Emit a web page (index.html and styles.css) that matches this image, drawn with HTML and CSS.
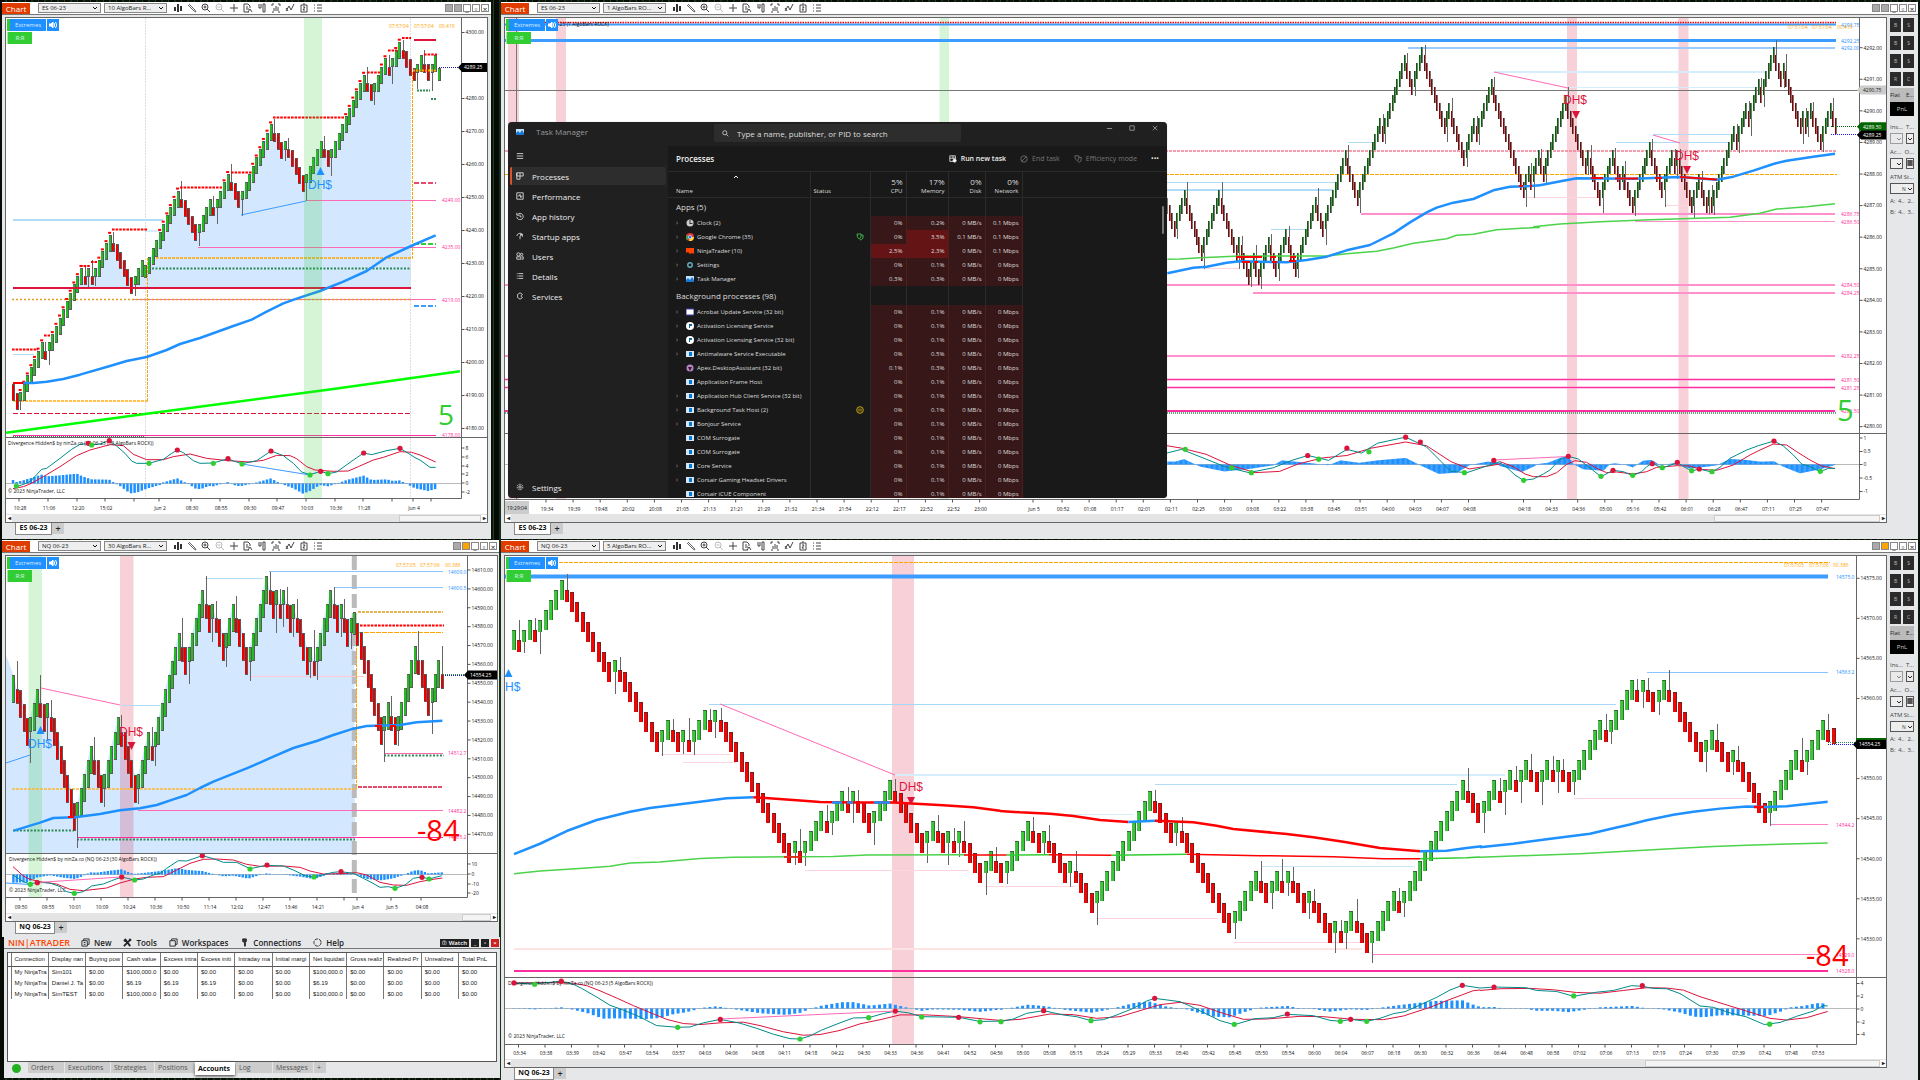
FILE: index.html
```html
<!DOCTYPE html>
<html lang="en">
<head>
<meta charset="utf-8">
<title>Trading desktop</title>
<link rel="stylesheet" href="styles.css">
</head>
<body>
<template id="tools">
  <button aria-label="Bar style"><svg viewBox="0 0 10 10"><path d="M1 4h2v4H1zM4 1h2v8H4zM7 3h2v5H7z" fill="#333" stroke="none"/></svg></button>
  <button aria-label="Draw"><svg viewBox="0 0 10 10"><path d="M2 1l6 6M1 2l6 6M7 8l2 1-1-2" stroke="#666"/></svg></button>
  <button aria-label="Zoom in"><svg viewBox="0 0 10 10"><circle cx="4" cy="4" r="3"/><path d="M6 6l3 3M2.500 4h3M4 2.500v3"/></svg></button>
  <button aria-label="Zoom out" disabled><svg viewBox="0 0 10 10"><circle cx="4" cy="4" r="3"/><path d="M6 6l3 3M2.500 4h3"/></svg></button>
  <button aria-label="Crosshair"><svg viewBox="0 0 10 10"><path d="M5 1v8M1 5h8"/></svg></button>
  <button aria-label="Data box"><svg viewBox="0 0 10 10"><path d="M6 9H1V1h4l2 2v2M3 4h2M3 6h3M5 9l2-3 2 3"/></svg></button>
  <button aria-label="Chart trader"><svg viewBox="0 0 10 10"><path d="M1 2h4M1 4h4M3 4v2M6 1h2v8H6z"/></svg></button>
  <button aria-label="Data series"><svg viewBox="0 0 10 10"><path d="M1 3V1h2M7 1h2v2M1 9h2M7 9h2M3 8V5M5 8V3M7 8V4"/></svg></button>
  <button aria-label="Indicators"><svg viewBox="0 0 10 10"><path d="M1 8l3-5 2 4 3-6M1 5l2 3"/></svg></button>
  <button aria-label="Strategies"><svg viewBox="0 0 10 10"><path d="M2 2h6v7H2zM4 1h2M4 4h2l-2 3h2"/></svg></button>
  <button aria-label="Properties"><svg viewBox="0 0 10 10"><path d="M1 2h1M1 5h1M1 8h1M4 2h5M4 5h5M4 8h5"/></svg></button>
</template>
<template id="trader">
  <div class="grid-buttons"><button>B</button><button>S</button><button>B</button><button>S</button><button>B</button><button>S</button><button>R</button><button>C</button></div>
  <div class="flat"><span>Flat</span><span>E...</span></div>
  <button class="pnl">PnL</button>
  <div class="pair"><span>Ins...</span><span>T...</span></div>
  <div class="pair boxes"><button class="off" aria-label="Instrument"><svg viewBox="0 0 6 4"><path d="M1 1l2 2 2-2"/></svg></button><button aria-label="TIF"><svg viewBox="0 0 6 4"><path d="M1 1l2 2 2-2"/></svg></button></div>
  <div class="pair"><span>Ac...</span><span>O...</span></div>
  <div class="pair boxes"><button aria-label="Account"><svg viewBox="0 0 6 4"><path d="M1 1l2 2 2-2"/></svg></button><button class="calc" aria-label="Order quantity"><svg viewBox="0 0 6 6"><path d="M0 1h6M0 3h6M0 5h6M2 0v6M4 0v6"/></svg></button></div>
  <div class="pair"><span>ATM</span><span>St...</span></div>
  <div class="pair boxes one"><button aria-label="ATM strategy">N <svg viewBox="0 0 6 4"><path d="M1 1l2 2 2-2"/></svg></button></div>
  <div class="quote"><span>A:</span><span>4..</span><span>2..</span></div>
  <div class="quote"><span>B:</span><span>4..</span><span>3..</span></div>
</template>

<main class="desktop">
  <div class="col left">
    <section class="win w-es10">
      <header class="bar"><h2>Chart</h2><select aria-label="Instrument"><option>ES 06-23</option></select><select aria-label="Interval"><option>10 AlgoBars R...</option></select><div class="tools"></div><div class="ctl"><i class="link"></i><i class="link"></i><button aria-label="Minimize">_</button><button aria-label="Maximize">▫</button><button aria-label="Close">×</button></div></header>
      <div class="pane">
        <div class="badges"><div><button class="ext">Extremes</button><button class="snd" aria-label="Sound"><svg viewBox="0 0 8 8"><path d="M0 3h2l2-2v6L2 5H0z" fill="#fff"/><path d="M5 2q1.500 2 0 4M6.500 1q2.500 3 0 6"/></svg></button></div><button class="rr">R:R</button></div>
        <svg class="chart" id="es10" viewBox="6 18 481 496"></svg>
        <div class="scroll"><b>◂</b><i class="th16"></i><b>▸</b></div>
      </div>
      <nav class="tabs"><a href="#es10">ES 06-23</a><button aria-label="Add tab">+</button></nav>
    </section>
    <section class="win w-nq30">
      <header class="bar"><h2>Chart</h2><select aria-label="Instrument"><option>NQ 06-23</option></select><select aria-label="Interval"><option>30 AlgoBars R...</option></select><div class="tools"></div><div class="ctl"><i class="link"></i><i class="link on"></i><button aria-label="Minimize">_</button><button aria-label="Maximize">▫</button><button aria-label="Close">×</button></div></header>
      <div class="pane">
        <div class="badges"><div><button class="ext">Extremes</button><button class="snd" aria-label="Sound"><svg viewBox="0 0 8 8"><path d="M0 3h2l2-2v6L2 5H0z" fill="#fff"/><path d="M5 2q1.500 2 0 4M6.500 1q2.500 3 0 6"/></svg></button></div><button class="rr">R:R</button></div>
        <svg class="chart" id="nq30" viewBox="6 556 491 357"></svg>
        <div class="scroll"><b>◂</b><i class="th6"></i><b>▸</b></div>
      </div>
      <nav class="tabs"><a href="#nq30">NQ 06-23</a><button aria-label="Add tab">+</button></nav>
    </section>
    <section class="win center">
      <header class="menu"><h1>NIN|ATRADER</h1>
        <button><svg viewBox="0 0 10 10"><path d="M1 3h6v6H1zM3 3V1h6v6H7M3 5h2M3 7h2"/></svg>New</button>
        <button><svg viewBox="0 0 10 10"><path d="M1 9l7-7M2 1l6 8M1 2l2 2M7 1l2 2" stroke-width="2"/></svg>Tools</button>
        <button><svg viewBox="0 0 10 10"><path d="M1 3h6v6H1zM3 3V1h6v6H7"/></svg>Workspaces</button>
        <button><svg viewBox="0 0 10 10"><path d="M3 1h4v3L6 5v4H5V5L3 4z" fill="#333"/></svg>Connections</button>
        <button><svg viewBox="0 0 10 10"><circle cx="5" cy="5" r="4" stroke-dasharray="4 1"/></svg>Help</button>
        <div class="winbtns"><button class="watch"><svg viewBox="0 0 10 10"><path d="M1 3h8v6H1zM3 1h4" stroke="#fff"/><circle cx="5" cy="6" r="1" stroke="#fff"/></svg>Watch</button><button aria-label="Minimize">_</button><button aria-label="Maximize">▫</button><button class="red" aria-label="Close">×</button></div>
      </header>
      <div class="accounts">
        <table>
          <thead><tr><th class="g"></th><th>Connection</th><th>Display nan</th><th>Buying pow</th><th>Cash value</th><th>Excess intra</th><th>Excess initi</th><th>Intraday ma</th><th>Initial margi</th><th>Net liquidati</th><th>Gross realiz</th><th>Realized Pr</th><th>Unrealized</th><th>Total PnL</th></tr></thead>
          <tbody>
          <tr><td class="g"></td><td>My NinjaTra</td><td>Sim101</td><td>$0.00</td><td>$100,000.0</td><td>$0.00</td><td>$0.00</td><td>$0.00</td><td>$0.00</td><td>$100,000.0</td><td>$0.00</td><td>$0.00</td><td>$0.00</td><td>$0.00</td></tr>
          <tr><td class="g"></td><td>My NinjaTra</td><td>Daniel J. Ta</td><td>$0.00</td><td>$6.19</td><td>$6.19</td><td>$6.19</td><td>$0.00</td><td>$0.00</td><td>$6.19</td><td>$0.00</td><td>$0.00</td><td>$0.00</td><td>$0.00</td></tr>
          <tr><td class="g"></td><td>My NinjaTra</td><td>SimTEST</td><td>$0.00</td><td>$100,000.0</td><td>$0.00</td><td>$0.00</td><td>$0.00</td><td>$0.00</td><td>$100,000.0</td><td>$0.00</td><td>$0.00</td><td>$0.00</td><td>$0.00</td></tr>
          </tbody>
        </table>
      </div>
      <nav class="foot"><i></i><button class="t1">Orders</button><button class="t2">Executions</button><button class="t3">Strategies</button><button class="t4">Positions</button><button class="t5 cur">Accounts</button><button class="t6">Log</button><button class="t7">Messages</button><button class="t8" aria-label="Add tab">+</button></nav>
    </section>
  </div>

  <div class="col right">
    <section class="win w-es1">
      <header class="bar"><h2>Chart</h2><select aria-label="Instrument"><option>ES 06-23</option></select><select aria-label="Interval"><option>1 AlgoBars RO...</option></select><div class="tools"></div><div class="ctl"><i class="link"></i><i class="link"></i><button aria-label="Minimize">_</button><button aria-label="Maximize">▫</button><button aria-label="Close">×</button></div></header>
      <div class="split">
        <div class="pane">
          <div class="badges"><div><button class="ext">Extremes</button><button class="snd" aria-label="Sound"><svg viewBox="0 0 8 8"><path d="M0 3h2l2-2v6L2 5H0z" fill="#fff"/><path d="M5 2q1.500 2 0 4M6.500 1q2.500 3 0 6"/></svg></button></div><button class="rr">R:R</button></div>
          <svg class="chart" id="es1" viewBox="505 18 1381 496"></svg>
          <div class="scroll"><b>◂</b><i class="th12"></i><b>▸</b></div>
        </div>
        <aside class="trader"></aside>
      </div>
      <nav class="tabs"><a href="#es1">ES 06-23</a><button aria-label="Add tab">+</button></nav>
    </section>
    <section class="win w-nq5">
      <header class="bar"><h2>Chart</h2><select aria-label="Instrument"><option>NQ 06-23</option></select><select aria-label="Interval"><option>5 AlgoBars RO...</option></select><div class="tools"></div><div class="ctl"><i class="link"></i><i class="link on"></i><button aria-label="Minimize">_</button><button aria-label="Maximize">▫</button><button aria-label="Close">×</button></div></header>
      <div class="split">
        <div class="pane">
          <div class="badges"><div><button class="ext">Extremes</button><button class="snd" aria-label="Sound"><svg viewBox="0 0 8 8"><path d="M0 3h2l2-2v6L2 5H0z" fill="#fff"/><path d="M5 2q1.500 2 0 4M6.500 1q2.500 3 0 6"/></svg></button></div><button class="rr">R:R</button></div>
          <svg class="chart" id="nq5" viewBox="505 556 1381 503"></svg>
          <div class="scroll"><b>◂</b><i class="th17"></i><b>▸</b></div>
        </div>
        <aside class="trader"></aside>
      </div>
      <nav class="tabs"><a href="#nq5">NQ 06-23</a><button aria-label="Add tab">+</button></nav>
    </section>
  </div>

  <section class="tm">
    <header><svg class="ico" viewBox="0 0 8 8"><path d="M0 1h8v6H0z" fill="#bfe3ff"/><path d="M0 5l2-2 2 2 2-3 2 3v2H0z" fill="#1976d2"/></svg><h2>Task Manager</h2>
      <label class="search"><svg viewBox="0 0 10 10"><circle cx="4" cy="4" r="3"/><path d="M6 6l3 3"/></svg><input aria-label="Search" placeholder="Type a name, publisher, or PID to search"></label>
      <div class="tmctl"><button aria-label="Minimize"><svg viewBox="0 0 8 8"><path d="M1 4h6"/></svg></button><button aria-label="Maximize"><svg viewBox="0 0 8 8"><path d="M1 1h5v5H1z"/></svg></button><button aria-label="Close"><svg viewBox="0 0 8 8"><path d="M1 1l5 5M6 1L1 6"/></svg></button></div>
    </header>
    <nav>
      <button aria-label="Menu"><svg viewBox="0 0 10 10"><path d="M1 2h8M1 5h8M1 8h8"/></svg></button>
      <a class="cur" href="#p"><svg viewBox="0 0 10 10"><path d="M1 1h8v4H1zM1 1v8h4V1"/></svg>Processes</a>
      <a href="#p"><svg viewBox="0 0 10 10"><path d="M1 1h8v8H1zM2 5h2l1-2 1 4 1-2h1"/></svg>Performance</a>
      <a href="#p"><svg viewBox="0 0 10 10"><path d="M2 3a4 4 0 1 1-1 3M1 1v3h3M5 3v3h2"/></svg>App history</a>
      <a href="#p"><svg viewBox="0 0 10 10"><path d="M1 5a4 4 0 0 1 7-2M5 9V5l3-2M8 6V3H5"/></svg>Startup apps</a>
      <a href="#p"><svg viewBox="0 0 10 10"><circle cx="3" cy="3" r="2"/><circle cx="7" cy="3" r="1.500"/><path d="M1 9V6h5v3zM7 6h2v3H7"/></svg>Users</a>
      <a href="#p"><svg viewBox="0 0 10 10"><path d="M1 2h1M1 5h1M1 8h1M3 2h6M3 5h6M3 8h6"/></svg>Details</a>
      <a href="#p"><svg viewBox="0 0 10 10"><path d="M8 3L5 1 2 3v4l3 2 3-2M8 3L6 5l2 2"/></svg>Services</a>
      <a class="set" href="#p"><svg viewBox="0 0 10 10"><circle cx="5" cy="5" r="1.500"/><circle cx="5" cy="5" r="3.500" stroke-dasharray="2 1"/></svg>Settings</a>
    </nav>
    <div class="body" id="p">
      <div class="cmd"><h3>Processes</h3><button class="run"><svg viewBox="0 0 10 10"><path d="M1 1h7v4M1 1v7h4M1 4h7M5 1v4"/><circle cx="7" cy="7" r="2" fill="#fff"/></svg>Run new task</button><button disabled><svg viewBox="0 0 10 10"><circle cx="5" cy="5" r="4"/><path d="M2 8l6-6"/></svg>End task</button><button disabled><svg viewBox="0 0 10 10"><path d="M1 1h5v3q-1 3-2 3-3-1-3-6M6 3h3v3q0 2-2 3-2 0-2-2"/></svg>Efficiency mode</button><button class="more" aria-label="More">•••</button></div>
      <table class="proc"><colgroup><col class="c1"><col class="c2"><col class="c3"><col class="c4"><col class="c5"><col class="c6"><col></colgroup>
        <thead><tr><th>Name</th><th class="st">Status</th><th><b>5%</b>CPU</th><th><b>17%</b>Memory</th><th><b>0%</b>Disk</th><th><b>0%</b>Network</th><th></th></tr></thead>
        <tbody id="proc"></tbody>
      </table>
      <svg class="sort" viewBox="0 0 6 4"><path d="M1 3l2-2 2 2"/></svg><i class="thumb"></i>
    </div>
  </section>
</main>
<script src="app.js"></script>
</body>
</html>
```
FILE: styles.css
```css
*{box-sizing:border-box}
body{margin:0;background:#0b140c;font-family:"Open Sans","Noto Sans",sans-serif;font-size:7px;color:#222}
h1,h2,h3{margin:0;font-weight:400}
button,select,input{font:inherit;color:inherit;margin:0;padding:0;border:0;background:none;border-radius:0}
button svg,a svg{fill:none;stroke:currentColor}
.desktop{position:relative;display:grid;grid-template-columns:501fr 1419fr;padding-top:2px;background:repeating-linear-gradient(90deg,#060b06 0 5px,#18301a 5px 7px,#0a140a 7px 12px,#22401c 12px 13px)}
.col{display:flex;flex-direction:column;gap:1px;min-width:0}
.win{background:#e6e7e9}
.w-es10{margin:0 10px 0 2px;padding:0 3px 3px}
.w-nq30{margin:0 2px;padding:0 1px 2px 3px}
.w-es1{margin-right:2px;padding:0 0 3px 3px}
.w-nq5{margin-right:2px;padding-left:3px}
.bar{display:flex;align-items:center;height:13px;margin:0 -3px 2px;padding-right:2px;background:#fff;border-bottom:1px solid #777}
.w-nq30 .bar{margin-right:-1px}
.w-es1 .bar,.w-nq5 .bar{margin-right:0}
.bar h2{width:28px;height:11px;background:#e03c00;color:#fff;font-size:8px;line-height:11px;text-align:center;margin-right:8px}
.bar select{width:63px;height:10px;margin-right:3px;padding:0 3px;border:1px solid #888;background:#eee url("data:image/svg+xml,%3Csvg xmlns='http://www.w3.org/2000/svg' viewBox='0 0 6 4'%3E%3Cpath d='M1 1l2 2 2-2' fill='none' stroke='%23111'/%3E%3C/svg%3E") no-repeat right 2px center/6px 4px;font-size:6px;line-height:8px;appearance:none;color:#222}
.tools{display:flex;gap:4px;padding-left:3px}
.tools button{width:10px;height:10px;color:#444}
.tools button:disabled{color:#bbb}
.tools svg{display:block;width:10px;height:10px}
.ctl{display:flex;gap:1px;margin-left:auto}
.ctl i,.ctl button{width:8px;height:8px;border:1px solid #888;line-height:5px;font-size:8px;text-align:center}
.ctl i.link{background:#aaa}
.ctl i.on{background:#ffa500}
.pane{position:relative;background:#fff;border:1px solid #666;min-width:0}
.chart{display:block;width:100%;height:auto}
.badges{position:absolute;left:1px;top:1px;color:#dfefff;font-size:6px}
.badges div{display:flex;gap:1px;height:12px}
.badges button{display:block;height:12px;line-height:12px}
.ext{width:39px;background:#1e90ff;border-left:3px solid #32cd32!important}
.snd{width:12px;background:#1e90ff}
.snd svg{width:8px;height:8px;stroke:#fff}
.badges .snd svg{display:block;margin:0 auto}
.rr{width:25px;margin-top:1px;background:#32cd32;border-left:1px solid #9e9!important}
.scroll{display:flex;height:8px;align-items:center;background:#e4e4e4}
.scroll b{width:6px;font-size:6px;line-height:7px;text-align:center;background:#fff}
.scroll i{margin-left:auto;height:7px;background:#f4f4f4;border:1px solid #ccc}
.th16{width:17%}.th6{width:6%}.th12{width:12%}.th17{width:17%}
.tabs{display:flex;height:13px;padding-left:10px}
.w-nq5 .tabs{height:12px}
.tabs a{width:37px;height:13px;margin-top:-1px;background:#fff;border:1px solid #888;border-top:0;color:#111;text-decoration:none;font-weight:700;font-size:7px;line-height:12px;text-align:center;white-space:nowrap}
.w-nq30 .tabs a,.w-nq5 .tabs a{width:40px}
.tabs button{width:12px;height:11px;background:#ccc;font-size:9px;font-weight:600;line-height:10px}
.split{display:grid;grid-template-columns:1fr 31px}
.trader{padding:1px 4px 0 3px;font-size:6px;color:#444}
.grid-buttons{display:grid;grid-template-columns:11px 11px;justify-content:space-between;gap:4px 0}
.grid-buttons button{height:14px;background:#2b2b2b;color:#bbb;font-size:5px}
.flat{display:flex;justify-content:space-between;height:14px;margin-top:2px;background:#bbb;line-height:14px;color:#222}
.pnl{display:block;width:100%;height:14px;background:#000;color:#ccc;margin-bottom:5px}
.pair{display:flex;justify-content:space-between;height:12px;line-height:12px}
.boxes{height:13px}
.boxes button{width:13px;height:11px;border:1px solid #555;background:#eee;font-size:5px;line-height:8px;text-align:right}
.boxes button:last-child{width:8px}
.boxes.one button{width:100%}
.boxes svg{width:6px;height:4px;stroke:#222}
.boxes .off{opacity:.5}
.boxes .calc svg{height:6px}
.quote{display:flex;justify-content:space-between;height:11px;line-height:11px}
.center{margin:-1px 1px 0 4px;padding:0 3px 3px;display:flex;flex-direction:column;height:141px}
.menu{display:flex;align-items:center;height:12px;margin:0 -3px 3px;padding:0 1px 0 4px;border-bottom:1px solid #777;font-weight:600;font-size:8px}
.menu h1{color:#ff4500;font-size:9px;font-weight:600;width:73px}
.menu>button{display:flex;align-items:center;gap:4px;margin-right:12px;line-height:10px}
.menu svg{width:9px;height:9px}
.winbtns{display:flex;gap:2px;margin-left:auto}
.winbtns button{height:8px;width:8px;background:#222;color:#fff;font-size:6px;line-height:6px}
.winbtns .watch{display:flex;align-items:center;gap:2px;width:29px;padding:0 2px}
.winbtns .watch svg{width:7px;height:7px}
.winbtns .red{background:#c22}
.accounts{flex:1;background:#fff;border:1px solid #555}
.accounts table{width:100%;table-layout:fixed;border-collapse:collapse;font:6px "Liberation Sans",Arial,sans-serif;color:#222}
.accounts th,.accounts td{height:11px;padding:0 0 0 3px;text-align:left;font-weight:400;white-space:nowrap;overflow:hidden;border-right:1px solid #777}
.accounts th{height:13px;border-bottom:1px solid #555}
.accounts th:last-child,.accounts td:last-child{border-right:0}
.accounts .g{width:3px;padding:0}
.foot{display:flex;align-items:flex-start;height:13px;gap:1px;color:#555}
.foot i{width:9px;height:9px;margin:2px 6px 0 5px;border-radius:50%;background:#20b020}
.foot button{height:11px;background:#ccc;text-align:left;padding-left:3px;line-height:11px}
.foot .cur{height:13px;background:#fff;color:#111;font-weight:700;box-shadow:0 1px 3px #333}
.t1{width:36px}.t2{width:45px}.t3{width:43px}.t4{width:39px}.t5{width:40px}.t6{width:36px}.t7{width:40px}.t8{width:12px}
.tm{position:absolute;left:508px;top:122px;width:659px;height:376px;display:grid;grid-template:24px 1fr/160px 1fr;background:#202020;border-radius:4px;overflow:hidden;color:#eee;font-size:8px;box-shadow:0 0 1px #aaa}
.tm svg{fill:none;stroke:currentColor}
.tm>header{grid-column:1/3;display:flex;align-items:flex-start;padding-top:2px}
.tm>header .ico{width:8px;height:8px;margin:4px 0 0 8px;stroke:none}
.tm>header h2{margin:2px 0 0 12px;width:178px;font-size:8px;line-height:12px;color:#999}
.search{display:flex;align-items:center;width:247px;height:18px;padding:0 8px;gap:8px;background:#2d2d2d;border-radius:2px}
.search svg{width:7px;height:7px}
.search input{flex:1;height:14px;outline:0}
.search input::placeholder{color:#ddd;opacity:1}
.tmctl{display:flex;gap:16px;margin-left:auto;padding:1px 8px 0 0;color:#999}
.tmctl svg{display:block;width:7px;height:7px}
.tm nav{display:flex;flex-direction:column;gap:2px;padding:1px 2px 5px}
.tm nav button{width:20px;height:18px}
.tm nav svg{width:8px;height:8px}
.tm nav a{display:flex;align-items:center;gap:8px;height:18px;padding-left:6px;color:#eee;text-decoration:none;border-radius:2px}
.tm nav .cur{background:#2d2d2d;border-left:2px solid #d9532c;padding-left:4px}
.tm nav .set{margin-top:auto}
.body{position:relative;background:#191919;min-width:0}
.cmd{display:flex;align-items:center;height:26px;padding:0 8px;font-size:7px;gap:14px;border-bottom:1px solid #2a2a2a}
.cmd h3{font-size:8px;font-weight:600;margin-right:auto}
.cmd button{display:flex;align-items:center;gap:4px}
.cmd .run{font-weight:600}
.cmd button:disabled{color:#777}
.cmd svg{width:8px;height:8px}
.proc{width:100%;table-layout:fixed;border-collapse:collapse;font-size:6px;line-height:8px;color:#ddd}
.c1{width:142px}.c2{width:60px}.c3{width:36px}.c4{width:42px}.c5{width:37px}.c6{width:37px}
.proc th{height:25px;padding:0 3px 2px 8px;text-align:right;vertical-align:bottom;font-weight:400;border-right:1px solid #2b2b2b;border-bottom:1px solid #2b2b2b}
.proc th:first-child,.proc .st{text-align:left}
.proc th.st{padding-left:3px}
.proc th b{display:block;font-weight:400;font-size:8px;line-height:11px}
.proc td{height:14px;padding:0 3px;text-align:right;white-space:nowrap;border-right:1px solid #2b2b2b}
.proc td:first-child{text-align:left;padding-left:8px}
.proc td:last-child,.proc th:last-child{border-right:0}
.proc .grp td{height:19px;font-size:8px}
.proc .m{background:#371717;border-color:#4a2020}
.proc .h{background:#641414}
.proc td svg{width:8px;height:8px;vertical-align:middle;stroke:none;margin-right:3px}
.proc td i{display:inline-block;width:10px;font-style:normal;color:#999;font-size:7px;line-height:7px}
.sort{position:absolute;left:65px;top:29px;width:6px;height:4px}
.thumb{position:absolute;right:3px;top:60px;width:2px;height:28px;background:#777;border-radius:1px}
```
FILE: app.js
```js
const NS = 'http://www.w3.org/2000/svg';
document.querySelectorAll('.tools').forEach(n => n.append(document.getElementById('tools').content.cloneNode(true)));
document.querySelectorAll('.trader').forEach(n => n.append(document.getElementById('trader').content.cloneNode(true)));

const RED = '#ff0000', BLUE = '#1e90ff', PINK = '#ff69b4', DEEP = '#ff2fa0', SKY = '#b0dcf8', CRIM = '#dc143c', LIME = '#32cd32', ORANGE = '#ffa500', SEA = '#2e8b57', TEAL = '#008b8b';

function chart(id) {
  const svg = document.getElementById(id);
  const add = (tag, a, t) => { const e = document.createElementNS(NS, tag); for (const k in a) e.setAttribute(k, a[k]); if (t !== undefined) e.textContent = t; svg.append(e); return e; };
  const rect = (x, y, w, h, fill, o = 1) => add('rect', {x, y, width: w, height: h, fill, opacity: o});
  const box = (x, y, w, h, fill) => add('rect', {x, y, width: w, height: h, fill, 'shape-rendering': 'crispEdges'});
  const line = (x1, y1, x2, y2, c, w = 1, dash = '') => add('line', {x1, y1, x2, y2, stroke: c, 'stroke-width': w, 'stroke-dasharray': dash});
  const h = (x1, x2, y, c, w = 1, dash = '') => line(x1, y, x2, y, c, w, dash);
  const text = (x, y, s, c = '#111', size = 5, anchor = 'start', family = '') => { const t = add('text', {x, y: y + size * .36, 'text-anchor': anchor}, s); t.style.fill = c; t.style.fontSize = size + 'px'; if (family) t.style.fontFamily = family; };
  // Sample lists are stored on a finer grid: origin (ox, oy), sx and sy samples per unit.
  const grid = (ox, oy, sx, sy) => s => s.split(' ').map(p => { const [a, b] = p.split(','); return [ox + a / sx, oy + b / sy]; });
  const poly = (pts, c, w = 1) => add('polyline', {points: pts.join(' '), fill: 'none', stroke: c, 'stroke-width': w, 'stroke-linejoin': 'round'});
  const dots = (pts, c) => pts.forEach(p => add('circle', {cx: p[0], cy: p[1], r: 2.6, fill: c}));
  const hist = (pts, zero, x0, dx, w) => {
    for (let x = x0; x <= pts[pts.length - 1][0] + .5; x += dx) {
      let i = pts.findIndex(p => p[0] >= x); if (i < 1) i = i < 0 ? pts.length - 1 : 1;
      const [a, b] = [pts[i - 1], pts[i]], y = a[1] + (b[1] - a[1]) * (x - a[0]) / (b[0] - a[0]);
      if (x < pts[0][0] - 1) continue;
      rect(x - w / 2, Math.min(y, zero), w, Math.max(.3, Math.abs(y - zero)), BLUE);
    }
  };
  // Range bars: each run continues one way, a turn opens a step back and closes at the reversal distance.
  const plan = ({x, dx, y, step, rev, runs}) => {
    const out = []; let c = y, dir = '', n = 0, force = null;
    const extra = [.4, 1, .1, .6, .2, 1.2, .3];
    runs.split(' ').forEach(r => {
      if (r[0] === '=') { force = +r.slice(1); return; }
      for (let i = 0; i < +r.slice(1); i++) {
        const s = r[0] === 'U' ? -1 : 1, turn = dir && dir !== r[0]; let o, wick = null;
        const prev = c;
        if (force !== null) { c = force; o = c - s * step * 1.6; force = null; }
        else if (!dir) { o = c - s * 2 * step; }
        else if (turn) { o = c + s * step; c += s * rev; wick = prev - s * step * extra[n % 7]; }
        else { c += s * step; o = c - s * 2 * step; }
        out.push({x: x + dx * n, o, c, up: s < 0, wick}); dir = r[0]; n++;
      }
    });
    return out;
  };
  const bars = (list, kind) => list.forEach(b => {
    const x = Math.round(b.x), t = Math.round(Math.min(b.o, b.c)), hh = Math.round(Math.abs(b.o - b.c));
    if (b.wick !== null) { const a = Math.min(t, b.wick), z = Math.max(t + hh, b.wick); box(x, a, 1, z - a, '#666'); }
    if (kind === 2) { box(x - 1, t, 1, hh, b.up ? '#006400' : '#8b0000'); box(x, t, 1, hh, '#777'); }
    else if (kind === 3) { box(x - 1, t, 3, hh, '#5a5a5a'); box(x - 1, t + 1, 2, hh - 2, b.up ? '#27b827' : '#e80000'); }
    else { box(x - 2, t, 4, hh, b.up ? '#2f6e2f' : '#702020'); box(x - 1, t + 1, 2, hh - 1, b.up ? '#32cd32' : '#ff0000'); box(x - 2, t + 1, 1, hh - 1, b.up ? '#5fae5f' : '#d01010'); }
  });
  const tag = (x, y, w, s, bg, fg = '#fff') => { add('path', {d: `M${x} ${y}l4 -4.500h${w}v9h-${w}z`, fill: bg}); text(x + 6, y, s, fg); };
  const tri = (x, y, up, c) => add('path', {d: up ? `M${x - 4} ${y + 4}h8l-4 -8z` : `M${x - 4} ${y - 4}h8l-4 8z`, fill: c});
  const dh = (x, y, c, s = 'DH$') => text(x, y, s, c, 12, 'start', 'Liberation Sans, sans-serif');
  const frame = ({x0, x1, ax, top, div, bot, prices, osc, times, ty}) => {
    h(x0, x1, div, '#666'); h(x0, ax, bot, '#666'); line(ax, top, ax, bot, '#666');
    prices.forEach(([y, s]) => { h(ax, ax + 3, y, '#555'); text(ax + 4, y, s); });
    osc.forEach(([y, s]) => { h(ax, ax + 3, y, '#555'); text(ax + 4, y, s); });
    times.forEach(([x, s]) => { line(x, bot, x, bot + 3, '#555'); text(x + 1, ty, s, '#111', 5, 'middle'); });
  };
  return {add, rect, box, line, h, text, grid, poly, dots, hist, plan, bars, tag, tri, dh, frame};
}
const series = (n, y, dy, v, dv, skip = []) => [...Array(n).keys()].filter(i => !skip.includes(i)).map(i => [y + dy * i, (v + dv * i).toFixed(2)]);

{ // ES, 10 range
  const c = chart('es10'), g = c.grid(0, 270, 3, 3);
  const b = c.plan({x: 13, dx: 3.577, y: 401, step: 8.27, rev: 17.3, runs: 'D2 U7 D1 U10 D1 U1 D1 U5 D6 U3 =265 U10 D5 U4 D1 U4 D3 U9 D3 U1 D5 U5 D2 U10 D2 U4 D1 U3 D3 =81 D1 U2 D2 U2 =68 U1'});
  const fill = b.filter(p => p.x > 76 && p.x < 412);
  c.add('polygon', {points: `76,287 ${fill.map(p => p.x + ',' + Math.min(287, Math.min(p.c, p.o) + 4)).join(' ')} 411,287`, fill: '#d3e8fe'});
  c.line(145.5, 18, 145.5, 498, '#ddd', 1, '2 1'); c.line(410.5, 18, 410.5, 498, '#ddd', 1, '2 1');
  c.h(13, 163, 220, SKY, 2); c.h(145, 160, 231, SKY); c.h(13, 34, 354.500, SKY);
  c.h(148, 413, 258, ORANGE, 1.500, '3 1'); c.line(412.500, 72, 412.500, 258, ORANGE, 1, '3 1');
  c.h(13, 148, 401, '#ffc04d', 2, '3 1'); c.line(147.500, 258, 147.500, 401, ORANGE, 1, '3 1');
  c.h(152, 411, 268.500, SEA, 2, '2 1.500'); c.h(13, 145, 436.500, SEA, 1, '1 1');
  c.h(198, 436, 247.500, PINK); c.h(306, 436, 200.500, PINK); c.h(134, 436, 299.500, PINK); c.h(13, 436, 435.500, DEEP);
  c.h(12, 411, 299.500, '#e0a020', 1.500, '2 2');
  c.bars(b, 3);
  let top = 999; b.forEach(p => { if (p.up && p.c < top) { top = p.c; c.rect(p.x - 1.500, p.c - 3, 3, 2, RED); } });
  [[12, 38, 349.500], [112, 147, 229.500], [180, 222, 187.500], [231, 252, 172.500], [273, 345, 117.500], [367, 380, 72.500], [388, 397, 50.500], [402, 411, 38], [424, 437, 54.500], [80, 90, 266], [91, 97, 262], [44, 50, 335.500]].forEach(([a, z, y]) => c.h(a, z, y, RED, 2, '2.600 1'));
  c.h(13, 24, 383, RED, 2);
  c.h(13, 411, 288, CRIM, 2); c.h(13, 411, 413.500, CRIM, 1, '5 2');
  c.h(414, 436, 40, CRIM, 2); c.h(414, 436, 183, CRIM, 1.500, '5 2'); c.h(414, 436, 244, LIME, 2, '5 2'); c.h(414, 436, 306, '#3c9cff', 2, '5 2');
  c.h(413, 437, 70.500, ORANGE, 2, '2 1'); c.h(417, 430, 90.500, SEA, 2, '2 1'); c.h(431, 437, 99, SEA, 2, '2 1');
  c.poly(g('18,488 440,431 1000,357 1380,304'), '#00ff00', 2.500);
  c.poly(g('70,339 100,339 140,335 190,327 240,314 330,288 380,273 440,261 500,240 540,222 600,204 650,186 700,168 755,149 800,125 850,100 890,86 960,63 1030,35 1100,3 1160,-38 1240,-75 1307,-104'), BLUE, 2.500);
  c.line(241, 215, 306, 201, '#3c9cff');
  c.rect(304, 18, 18, 480, LIME, .2);
  c.tri(320.500, 171, true, BLUE); c.dh(308, 185, BLUE);
  c.h(439, 460, 67.500, '#1a1aa0', 1, '1 1');
  [[442, 200.500, '4249.00'], [442, 247.500, '4235.00'], [442, 300, '4219.00'], [442, 435, '4178.00']].forEach(a => c.text(...a, DEEP));
  c.text(389, 26.500, '07:57:04', ORANGE); c.text(414, 26.500, '07:57:04', ORANGE); c.text(439, 26.500, '00.419', ORANGE);
  c.text(438, 415, '5', LIME, 28);
  c.h(6, 461, 483.500, '#bbb');
  c.hist(g('39,630 49,636 70,631 124,614 140,619 180,616 230,611 250,620 275,628 328,629 345,640 360,648 390,670 410,668 440,656 480,645 490,637 532,625 550,635 565,642 590,658 610,655 625,648 640,649 684,636 700,645 720,649 760,640 813,625 840,640 880,655 909,671 930,663 960,645 984,649 1010,641 1040,630 1091,617 1115,630 1160,628 1180,633 1200,631 1220,642 1245,655 1285,663 1307,657'), 483.500, 13, 3.577, 2.500);
  c.poly(g('39,656 70,650 90,642 130,620 180,590 230,557 270,540 330,524 370,527 400,553 440,569 490,569 520,560 570,552 620,565 684,572 750,576 790,571 830,556 870,557 890,566 920,590 945,600 1000,604 1045,603 1075,590 1120,570 1150,562 1200,545 1235,547 1260,555 1307,576'), CRIM);
  c.poly(g('48,650 65,645 90,635 125,598 140,595 180,565 215,538 240,523 265,521 275,525 300,522 328,512 350,528 375,550 395,573 410,580 447,580 490,568 515,550 532,540 550,548 580,572 600,580 640,579 684,566 700,573 726,581 770,572 813,543 850,557 880,580 905,606 930,614 962,604 984,611 1010,606 1060,570 1091,549 1115,554 1160,542 1200,535 1225,550 1245,563 1260,570 1290,592 1307,592'), TEAL);
  c.line(242, 464, 310, 475, '#3c9cff');
  c.text(8, 443.500, 'Divergence Hidden$ by ninZa.co (ES 06-23 (10 AlgoBars ROCK))'); c.text(8, 491, '© 2023 NinjaTrader, LLC');
  c.dots(g('265,520 328,512 532,540 684,566 813,543 962,604 1091,549 1200,535'), CRIM);
  c.dots(g('49,648 275,525 447,580 640,580 726,582 930,615 984,611'), LIME);
  c.frame({x0: 6, x1: 487, ax: 461.500, top: 18, div: 437.500, bot: 498.500, ty: 508, prices: series(13, 32.500, 33, 4300, -10, [1]),
    osc: [[448, 8], [457, 6], [466, 4], [474, 2], [483, 0], [492, -2]],
    times: [[19, '10:28'], [48, '11:06'], [77, '12:20'], [105, '15:02'], [134, ''], [159, 'Jun 2'], [191, '08:30'], [220, '08:55'], [249, '09:30'], [277, '09:47'], [306, '10:03'], [335, '10:36'], [363, '11:28'], [392, ''], [413, 'Jun 4'], [431, '']]});
  c.tag(458, 67.500, 26, '4289.25', '#000');
}
{ // NQ, 30 range
  const c = chart('nq30'), g = c.grid(0, 810, 3, 3);
  const b = c.plan({x: 13.4, dx: 3.373, y: 675, step: 14.15, rev: 28.8, runs: 'U1 D4 U3 D2 U1 D8 U5 D3 U5 D5 U4 D1 U8 D2 U5 D2 U1 D3 U3 D4 U6 D2 U1 D1 U1 D2 U1 D4 U1 D1 U5 D2 U1 D2 U1 =612 U1 =646 D8 U2 D2 U6 D4 U3 D1'});
  c.add('polygon', {points: `6,853 6,655 ${b.filter(p => p.x < 356).map(p => p.x + ',' + Math.min(p.c, p.o)).join(' ')} 355,853`, fill: '#d3e8fe'});
  c.rect(28.500, 556, 13.500, 341, LIME, .2); c.rect(120, 556, 13.500, 341, CRIM, .2);
  c.line(354.300, 556, 354.300, 897, '#bbb', 5, '14 5');
  c.h(205, 263, 578.500, SKY); c.h(269, 443, 571.500, '#8cc4ff'); c.h(334, 443, 587.500, '#8cc4ff'); c.h(122, 160, 705.500, SKY);
  c.h(250, 364, 676.500, '#ffc8d4'); c.h(384, 443, 753.500, PINK); c.h(138, 443, 810.500, PINK); c.h(78, 443, 837.500, DEEP);
  c.h(358, 443, 612, '#e0a020', 1.500, '3 1'); c.h(358, 443, 632.500, ORANGE, 1, '5 1'); c.h(358, 443, 787, CRIM, 1.500, '4 1');
  c.h(12, 356, 789, '#ffb733', 1.500, '3 1'); c.line(356.500, 632, 356.500, 789, ORANGE, 1, '3 1');
  c.h(13, 74, 830.500, SEA, 2, '2 1.500'); c.h(77, 355, 839.500, SEA, 2, '2 1.500'); c.h(384, 444, 755.500, SEA, 2, '2 1.500');
  c.bars(b, 3);
  c.h(360, 444, 625.500, RED, 2, '2.600 1');
  c.poly(g('42,62 120,38 160,24 225,22 300,12 360,1 420,-5 470,-15 520,-32 560,-45 600,-66 640,-85 700,-109 740,-125 780,-142 820,-160 880,-186 950,-207 1000,-225 1060,-244 1100,-252 1200,-255 1250,-263 1327,-268'), BLUE, 2.500);
  c.h(68, 74, 817, RED, 2); c.h(375, 382, 726, RED, 2); c.h(390, 396, 726, RED, 2);
  c.line(41, 688, 120, 705, PINK); c.line(6, 763, 30, 755, '#3c9cff');
  c.tri(40.500, 730, true, BLUE); c.dh(28, 744, BLUE); c.dh(119, 732, CRIM); c.tri(131.500, 746, false, CRIM);
  c.h(445, 465, 674.500, SEA, 1, '1 1'); c.h(445, 465, 675.500, '#1a1aa0', 1, '1 1');
  c.text(448, 572.500, '14609.0', BLUE); c.text(448, 588, '14600.5', BLUE);
  [[448, 753.500, '14512.7'], [448, 811, '14482.2'], [448, 837.500, '14465.2']].forEach(a => c.text(...a, DEEP));
  c.text(396, 565, '07:57:05', ORANGE); c.text(420, 565, '07:57:06', ORANGE); c.text(445, 565, '00.386', ORANGE);
  c.text(417, 831, '-84', RED, 29);
  c.h(6, 467, 874.500, '#bbb');
  c.hist(g('39,218 80,217 112,202 150,196 190,203 225,207 240,202 270,187 290,188 330,182 365,178 400,192 430,189 480,183 535,174 560,180 607,183 640,192 670,199 700,197 745,206 780,195 800,190 830,194 860,195 900,200 942,207 970,198 1000,190 1040,188 1070,195 1100,207 1145,211 1180,205 1210,195 1240,182 1260,180 1285,190 1327,187'), 874.500, 13.4, 3.373, 2.400);
  c.poly(g('39,170 70,198 90,208 125,216 170,222 210,238 250,242 320,234 360,219 404,207 440,202 490,200 530,180 570,160 610,148 650,147 700,150 740,163 780,169 850,168 900,172 930,183 970,192 1020,191 1070,188 1100,195 1140,217 1180,225 1220,226 1260,215 1300,208 1327,204'), CRIM);
  c.poly(g('39,195 55,205 70,215 90,222 112,217 150,219 180,230 200,245 223,250 250,245 275,228 310,222 335,212 365,201 404,210 430,207 460,195 480,190 500,175 535,152 560,153 607,137 640,146 670,157 710,157 750,176 800,166 850,168 880,180 915,197 942,201 970,194 1000,187 1022,185 1060,190 1090,205 1110,215 1140,232 1165,230 1185,235 1215,225 1240,205 1265,201 1287,207 1325,197'), TEAL);
  c.line(37, 882.500, 121, 877, PINK); c.line(6, 883, 30, 884.500, '#3c9cff');
  c.text(9, 859.500, 'Divergence Hidden$ by ninZa.co (NQ 06-23 (30 AlgoBars ROCK))'); c.text(9, 890, '© 2023 NinjaTrader, LLC');
  c.dots(g('112,218 365,201 607,137 801,165 1023,185 1266,202'), CRIM);
  c.dots(g('91,223 223,250 404,210 750,177 942,201 1185,235 1287,207'), LIME);
  c.frame({x0: 6, x1: 497, ax: 467.500, top: 556, div: 853.500, bot: 897.500, ty: 907, prices: series(15, 570, 18.88, 14610, -10),
    osc: [[864, 10], [874, 0], [884, -10], [893, -20]],
    times: [[20, '09:50'], [47, '09:55'], [74, '10:01'], [101, '10:09'], [128, '10:24'], [155, '10:36'], [182, '10:50'], [209, '11:14'], [236, '12:02'], [263, '12:47'], [290, '13:46'], [317, '14:21'], [344, ''], [357, 'Jun 4'], [391, 'Jun 5'], [421, '04:08']]});
  c.tag(464, 675, 29, '14554.25', '#000');
}
{ // ES, 1 range
  const c = chart('es1'), g = c.grid(1160, 0, 3, 3), k = c.grid(1500, 0, 3, 3), o = c.grid(1500, 270, 3, 3), v = c.grid(0, 0, .8167, .8167);
  [[508, 11], [556, 10], [1567, 10], [1678.500, 10]].forEach(([x, w]) => c.rect(x, 18, w, 481, CRIM, .2));
  c.rect(939.500, 18, 9.500, 481, LIME, .2);
  c.h(505, 1836, 24.500, '#3c9cff', 2); c.h(530, 1836, 22.500, RED, 1.500, '1.500 1'); c.h(505, 1836, 40.500, '#3c9cff', 3);
  c.h(1408, 1835, 48, '#9ccbff', 2); c.h(1494, 1767, 72, '#d6eefc', 2); c.h(1568, 1758, 87.500, '#d6eefc', 1); c.h(1348, 1373, 142.500, SKY);
  c.h(1653, 1732, 134.500, SKY); c.h(1616, 1728, 142.500, SKY); c.h(1271, 1306, 229.500, SKY);
  c.h(1167, 1335, 182.500, SKY); c.h(1167, 1333, 190, SKY, 2);
  c.h(505, 1859, 90.500, '#777'); c.line(516.500, 18, 516.500, 499, '#777');
  c.h(505, 1836, 151, '#f08098', 1.500, '3 1'); c.h(505, 1837, 174.500, ORANGE, 1, '4 1');
  c.h(1205, 1240, 268.500, '#ffd6de'); c.h(1525, 1600, 197.500, '#ffd6de'); c.h(1665, 1690, 205.500, '#ffd6de');
  c.h(1361, 1835, 214, '#ff90cc', 2); c.h(1635, 1835, 221.500, '#ff90cc', 1);
  [[505, 285], [1253, 293], [505, 356], [505, 379.500], [505, 387.500]].forEach(([x, y]) => c.h(x, 1835, y, '#ff90cc', 2));
  c.h(505, 1835, 379.500, DEEP); c.h(505, 1835, 387.500, DEEP); c.h(505, 1835, 411, DEEP, 2); c.h(505, 1836, 413, SEA, 1.500, '1 1');
  c.bars(c.plan({x: 1167.3, dx: 2.475, y: 213.3, step: 7.9, rev: 23.7, runs: 'D4 U4 D7 U7 D7 U1 D4 U2 D2 U4 D3 U4 D4 U8 D3 U9 D5 U9 D1 U9 D3 U4 D9 U2 D6 U4 D1 U6 D13 U2 D1 U3 D2 U9 D8 U1 D5 U5 D3 U1 D4 U7 D5 U4 D1 U1 D6 U3 D3 U1 D1 U9 D1 U4 D1 U4 D1 U5 D3 U1 D7 U1 D1 U2 D4 U4 D2'}), 2);
  c.poly(g('22,778 60,777 120,773 240,768 500,768 560,761 650,754 700,744 760,730 860,716 890,706 940,703 1010,689 1140,682'), '#4bd34b', 1.500);
  c.poly(k('100,680 180,672 300,665 450,659 690,652 780,640 830,627 920,620 1005,611'), '#4bd34b', 1.500);
  c.poly(k('116,683 100,680'), '#4bd34b', 1.500);
  c.poly(g('22,820 100,803 140,800 200,788 240,784 380,787 440,780 500,770 560,751 630,735 700,700 750,667 800,637 830,623 880,608 940,597 1000,571 1050,560 1110,558 1140,556'), BLUE, 2.500);
  c.poly(k('120,556 170,546 230,535 400,536 540,531 650,539 700,530 760,512 820,492 860,482 940,470 1005,461'), BLUE, 2.500);
  [[1242, 1250, 262], [1254, 1258, 262], [1272, 1277, 262], [1289, 1296, 261], [1236, 1262, 257], [1270, 1276, 257], [1290, 1296, 257], [1519, 1523, 186], [1530, 1532, 186], [1591, 1603, 178], [1615, 1638, 178.500], [1655, 1662, 178]].forEach(([a, z, y]) => c.h(a, z, y, RED, 2));
  c.line(1680, 177, 1717, 179.500, RED, 2);
  c.line(1494, 72, 1568, 88, PINK); c.line(1653, 135, 1680, 143, PINK);
  c.dh(1563, 100, CRIM); c.tri(1576, 115, false, CRIM); c.dh(1675, 156, CRIM); c.tri(1687, 170, false, CRIM);
  c.h(1831, 1858, 126.500, '#006400', 1, '1 1'); c.h(1831, 1858, 134.500, '#1a1aff', 1, '1 1');
  [[25, '4293.75'], [41, '4292.25'], [48, '4292.00']].forEach(([y, s]) => c.text(1841, y, s, BLUE));
  [[214, '4286.75'], [222, '4286.50'], [285, '4284.50'], [293, '4284.25'], [356, '4282.25'], [380, '4281.50'], [388, '4281.25'], [411, '4280.50']].forEach(([y, s]) => c.text(1841, y, s, DEEP));
  c.text(1788, 27, '07:57:04', ORANGE); c.text(1812, 27, '07:57:04', ORANGE); c.text(1837, 27, '00.419', ORANGE);
  c.text(558, 24.500, '-23 (1 AlgoBars ROCK)', '#111'); c.text(1837, 411, '5', LIME, 29);
  c.h(505, 1859, 464.500, '#bbb');
  c.hist(v('953,377 960,377 967,375 980,381 1000,385 1020,383 1040,380 1047,376 1068,378 1085,380 1095,376 1110,378 1125,376 1148,374 1160,380 1175,387 1190,386 1200,380 1215,377 1225,378'), 464.500, 1168, 1.240, 1.400);
  c.hist(o('0,588 65,606 100,590 115,582 145,578 185,562 205,560 220,582 250,598 310,602 330,582 345,580 375,584 398,592 430,572 455,570 480,586 520,580 540,584 570,596 620,590 650,586 690,567 740,570 780,575 822,574 850,590 900,610 960,598 1005,585'), 464.500, 1500, 1.240, 1.400);
  c.poly(v('953,364 965,366 985,371 1005,380 1025,386 1045,385 1060,379 1080,374 1100,372 1120,366 1148,361 1165,364 1185,377 1200,383 1225,379'), CRIM);
  c.poly(o('0,575 40,590 75,612 100,620 140,620 170,608 200,583 225,572 260,577 290,595 320,608 350,606 400,612 440,605 470,592 532,587 570,588 600,598 650,601 700,585 750,555 780,540 820,522 860,525 890,545 930,570 965,588 1005,596'), CRIM);
  c.poly(v('953,370 965,367 985,375 1000,381 1020,386 1040,382 1055,376 1068,372 1077,374 1085,376 1100,367 1112,370 1125,362 1148,357 1165,365 1185,385 1198,386 1225,377'), TEAL);
  c.poly(o('0,578 20,592 45,615 70,631 100,627 130,612 150,600 180,568 205,559 235,567 265,590 303,620 339,601 370,605 398,617 425,605 440,590 457,580 487,594 532,578 555,592 575,603 598,597 635,606 660,592 690,565 710,555 740,540 775,527 822,513 850,528 880,555 905,582 930,590 960,605 985,595 1005,595'), TEAL);
  c.line(1494, 460, 1568, 456.500, PINK);
  c.dots(o('205,559 339,601 457,581 532,577 598,597 822,513'), CRIM);
  c.dots(o('71,631 303,619 398,616 487,593 575,602 636,605 961,604'), LIME);
  c.dots(v('1068,372 1100,366 1148,357 1160,361 1220,376'), CRIM); c.dots(v('968,367 1006,382 1022,386 1077,375 1118,369 1196,386'), LIME);
  const names = '19:34 19:39 19:48 20:02 20:08 21:05 21:13 21:21 21:29 21:32 21:34 21:54 22:12 22:17 22:52 22:52 23:00'.split(' ').map((s, i) => [546 + i * 27.1, s]);
  c.frame({x0: 505, x1: 1886, ax: 1859.500, top: 18, div: 433.500, bot: 499.500, ty: 509, prices: series(13, 47.700, 31.58, 4292, -1),
    osc: [[438, 1], [451.500, .5], [464.500, 0], [478, -.5], [491.500, -1]],
    times: names.concat([[1033, 'Jun 5']], '00:52 01:08 01:17 02:01 02:11 02:25 03:00 03:08 03:22 03:38 03:45 03:51 04:00 04:03 04:07 04:08'.split(' ').map((s, i) => [1062 + i * 27.1, s]),
      '04:18 04:33 04:36 05:00 05:16 05:42 06:01 06:28 06:47 07:11 07:25 07:47'.split(' ').map((s, i) => [1523.500 + i * 27.1, s]))});
  c.rect(505, 501, 24, 13, '#ccc'); c.text(507, 508, '19:29:04', '#111');
  c.tag(1857, 90, 26, '4290.75', '#ccc', '#222'); c.tag(1857, 126.700, 26, '4289.50', '#006400'); c.tag(1857, 135, 26, '4289.25', '#000');
}
{ // NQ, 5 range
  const S = 2.9037, c = chart('nq5'), a = c.grid(500, 540, 3, S), m = c.grid(1000, 640, 3, 3), z = c.grid(1480, 540, 3, S);
  c.rect(892, 556, 22, 488, CRIM, .2);
  c.h(559, 1830, 562.500, ORANGE, 1, '4 1'); c.h(505, 1828, 576.500, '#3c9cff', 4);
  c.h(709, 1616, 704.500, '#a5d8f8'); c.h(895, 1505, 775, '#d6eefc', 2); c.h(1155, 1457, 784.500, SKY); c.h(1050, 1134, 814.500, '#d6eefc'); c.h(1261, 1415, 866.500, '#c8e8fa');
  c.h(1647, 1828, 672.500, '#8cc4ff'); c.h(661, 731, 754.500, '#ffd6de'); c.h(683, 736, 762.500, '#ffd6de'); c.h(805, 969, 870.500, '#ffd6de'); c.h(985, 1075, 886.500, '#ffd6de'); c.h(1096, 1218, 918.500, '#ffd6de'); c.h(1234, 1363, 942.500, '#ffd6de'); c.h(514, 1362, 949, '#ffe2e2', 2); c.h(1574, 1748, 798.500, '#ffd6de');
  c.h(1372, 1828, 954.500, '#ff80c4'); c.h(514, 1828, 971, DEEP, 2); c.h(1770, 1828, 824.500, '#ff80c4');
  c.bars(c.plan({x: 513.8, dx: 5.3, y: 630.2, step: 10.02, rev: 22.05, runs: 'U1 D1 U2 D1 U5 D9 U1 D8 U2 D2 U1 D1 U3 D1 U1 D14 U1 D1 U4 D1 U3 D1 U1 D3 U4 D6 U2 D2 U1 D1 U1 D4 U2 D2 U5 D2 U1 D4 U1 D4 U11 D4 U1 D10 U5 D2 U2 D1 U1 D3 U1 D4 U1 D1 U2 D3 U5 D1 U12 D3 U3 D1 U2 D1 U2 D2 U2 D1 U1 D2 U6 D1 U5 D1 U1 D2 U2 D7 U2 D3 U1 D6 U6 D1 U4 D1 =744 D1'}), 4);
  c.poly(a('42,969 120,961 250,953 330,947 390,938 480,935 600,925 700,921 870,920 1000,919 1100,915 1400,914'), '#4bd34b', 1.500);
  c.poly(m('-108,645 20,645'), RED, 1.500); c.poly(m('20,645 147,644'), LIME, 1.500); c.poly(m('147,644 335,646'), RED, 1.500); c.poly(m('335,646 560,643'), LIME, 1.500);
  c.poly(m('560,643 780,647 1000,650 1150,656 1260,656'), RED, 1.500); c.poly(m('1260,656 1400,653 1440,651'), LIME, 1.500);
  c.poly(z('0,921 150,916 300,911 450,903 600,895 700,890 800,886 1043,880'), '#4bd34b', 1.500); c.h(784, 802, 857, RED, 1.500);
  c.poly(a('42,912 120,882 200,845 290,813 390,789 450,778 600,760 680,750 760,747'), BLUE, 2.500);
  c.poly(a('760,747 880,755 960,761 1060,762 1180,762 1330,770 1420,776 1500,786'), RED, 2.500);
  [[832, 842], [847, 853], [874, 890]].forEach(([x, w]) => c.h(x, w, 802.500, BLUE, 2.500));
  c.poly(m('0,513 60,517 150,521 220,528 300,540 385,546'), RED, 2.500); c.poly(m('385,546 465,542'), BLUE, 2.500);
  c.poly(m('465,542 580,547 650,557 700,567 860,582 940,592 1030,605 1140,624 1260,634'), RED, 2.500); c.poly(m('1260,634 1340,632 1400,624 1445,619'), BLUE, 2.500);
  c.poly(z('0,892 100,882 200,869 330,853 400,837 450,826 500,814 580,798 640,789 720,780 800,774 860,775 920,773 1043,760'), BLUE, 2.500); c.h(1754, 1764, 807, RED, 2.500);
  c.line(720, 704, 895, 775, PINK);
  c.tri(508.500, 673, true, BLUE); c.dh(505, 687, BLUE, 'H$'); c.dh(899, 787, CRIM); c.tri(911, 801, false, CRIM);
  c.text(1836, 577, '14575.0', BLUE); c.text(1836, 672.500, '14563.2', BLUE);
  [[825, '14544.2'], [955, '14529.0'], [971, '14528.0']].forEach(([y, s]) => c.text(1836, y, s, DEEP));
  c.text(1784, 565, '07:57:05', ORANGE); c.text(1809, 565, '07:57:06', ORANGE); c.text(1833, 565, '00.386', ORANGE);
  c.text(1806, 956, '-84', RED, 29);
  c.h(1828, 1855, 742.500, SEA, 1, '1 1'); c.h(1828, 1855, 744.500, '#1a1aff', 1, '1 1');
  c.h(505, 1857, 1008.500, '#bbb');
  c.hist(a('42,1360 104,1363 184,1357 215,1363 260,1373 310,1390 350,1389 440,1391 480,1388 520,1377 560,1371 610,1358 650,1354 700,1362 780,1374 860,1379 900,1373 930,1362 965,1352 1027,1342 1060,1342 1110,1352 1170,1346 1200,1353 1240,1362 1265,1367 1300,1363 1376,1364 1440,1370 1495,1364'), 1008.500, 513.8, 5.3, 3);
  c.hist(m('0,1110 85,1094 140,1099 190,1109 273,1118 310,1112 360,1100 410,1087 450,1085 500,1100 560,1108 600,1120 640,1130 690,1132 740,1114 780,1103 862,1098 900,1105 940,1107 990,1115 1050,1108 1100,1110 1150,1102 1200,1095 1260,1088 1300,1083 1387,1081 1430,1098 1440,1100'), 1008.500, 1001.4, 5.3, 3);
  c.hist(z('0,1357 42,1356 74,1361 130,1360 170,1367 220,1367 265,1371 300,1366 360,1357 456,1353 500,1360 550,1363 600,1372 640,1384 670,1386 720,1380 800,1381 860,1382 900,1370 932,1357 970,1353 1010,1345 1043,1346'), 1008.500, 1483.7, 5.3, 3);
  c.poly(a('42,1287 150,1285 220,1287 260,1294 300,1309 350,1330 400,1352 450,1372 500,1392 550,1404 600,1407 660,1402 730,1400 780,1410 850,1428 910,1438 960,1436 1020,1424 1080,1405 1140,1393 1200,1379 1280,1379 1376,1384 1500,1395'), CRIM);
  c.poly(m('0,1142 60,1138 150,1122 220,1124 290,1135 360,1130 420,1112 480,1094 540,1087 600,1096 660,1117 730,1138 800,1137 900,1129 970,1130 1060,1138 1150,1139 1210,1128 1290,1102 1340,1082 1420,1052 1440,1050'), CRIM);
  c.poly(z('0,1308 60,1303 150,1302 220,1306 290,1314 360,1316 430,1308 500,1300 560,1301 610,1307 660,1326 720,1344 790,1365 870,1389 920,1394 980,1387 1043,1369'), CRIM);
  c.poly(a('42,1287 104,1289 184,1281 220,1290 245,1302 290,1327 330,1351 370,1365 420,1385 470,1410 533,1415 570,1414 610,1402 661,1392 720,1403 770,1418 820,1435 870,1448 900,1449 930,1440 965,1423 1020,1402 1060,1388 1106,1387 1150,1375 1186,1368 1225,1373 1265,1384 1376,1386 1440,1398 1500,1397'), TEAL);
  c.poly(m('0,1145 40,1137 80,1120 131,1112 190,1125 230,1130 273,1142 310,1139 345,1127 400,1105 440,1083 464,1075 540,1085 570,1098 620,1122 660,1142 703,1154 765,1136 820,1133 862,1123 940,1127 990,1141 1021,1144 1052,1138 1100,1144 1140,1135 1180,1121 1215,1115 1260,1095 1310,1072 1350,1050 1387,1036 1440,1044'), TEAL);
  c.poly(z('0,1301 42,1298 138,1300 170,1308 230,1311 281,1325 350,1313 400,1308 455,1294 487,1296 520,1302 560,1303 600,1317 660,1353 700,1357 750,1373 800,1385 853,1407 900,1401 950,1383 1000,1368 1030,1352 1043,1353'), TEAL);
  c.line(720, 1019, 895, 1011, PINK);
  c.text(508, 983.500, 'Divergence Hidden$ by ninZa.co (NQ 06-23 (5 AlgoBars ROCK))'); c.text(508, 1036.500, '© 2023 NinjaTrader, LLC');
  c.dots(a('42,1286 184,1281 661,1392 1186,1368 1376,1386'), CRIM); c.dots(a('104,1290 533,1415 900,1449 1106,1387 1265,1385 1440,1399'), LIME);
  c.dots(m('131,1112 464,1075 862,1122 1052,1138 1387,1036'), CRIM); c.dots(m('3,1145 273,1142 703,1153 1021,1144 1100,1144'), LIME);
  c.dots(z('42,1298 487,1294'), CRIM); c.dots(z('281,1324 869,1406'), LIME);
  c.frame({x0: 505, x1: 1886, ax: 1856.500, top: 556, div: 977.500, bot: 1044.500, ty: 1053, prices: series(10, 578.300, 40.06, 14575, -5, [4]),
    osc: [[983.500, 4], [996, 2], [1009, 0], [1022, -2], [1034.500, -4]],
    times: '03:34 03:38 03:39 03:42 03:47 03:54 03:57 04:03 04:06 04:08 04:11 04:18 04:22 04:30 04:33 04:36 04:41 04:52 04:56 05:00 05:08 05:15 05:24 05:29 05:33 05:40 05:42 05:45 05:50 05:54 06:00 06:04 06:07 06:18 06:30 06:32 06:36 06:44 06:48 06:58 07:02 07:06 07:13 07:19 07:24 07:30 07:39 07:42 07:48 07:53'.split(' ').map((s, i) => [518.500 + i * 26.5, s])});
  c.rect(1856, 738, 30, 3, '#006400'); c.tag(1853, 744.500, 29, '14554.25', '#000');
}

const icons = {
  clock: '<circle cx="4" cy="4" r="3.500" fill="#ccc"/><path d="M3.500 1h1v3h2v1h-3z" fill="#333"/>',
  chrome: '<circle cx="4" cy="4" r="4" fill="#e53935"/><path d="M4 4L1 7A4 4 0 0 1 .500 2z" fill="#43a047"/><path d="M4 4h4A4 4 0 0 1 3 8z" fill="#fdd835"/><circle cx="4" cy="4" r="1.700" fill="#2979ff" stroke="#fff" stroke-width=".5"/>',
  ninja: '<path d="M0 1h8v6l-2-1-2 1-2-2-2 1z" fill="#ff4500"/>',
  gear: '<circle cx="4" cy="4" r="2.200" fill="none" stroke="#6ab" stroke-width="1.500"/>',
  task: '<path d="M0 1h8v6H0z" fill="#bfe3ff"/><path d="M0 5l2-2 2 2 2-3 2 3v2H0z" fill="#1976d2"/>',
  win: '<path d="M0 1h8v6H0z" fill="#fff"/><path d="M0 1h8v6H0z" fill="none" stroke="#3a3ab0"/>',
  lic: '<circle cx="4" cy="4" r="4" fill="#fff"/><path d="M3 2h3v2H4v2H3z" fill="#169"/>',
  svc: '<path d="M0 1h8v6H0z" fill="#d6e6f5"/><path d="M3 2h3v4H3z" fill="#0078d4"/>',
  apex: '<circle cx="4" cy="4" r="3.500" fill="#b388c8"/><path d="M2 3h4L4 7z" fill="#412"/>'
};
const rows = [
  'Apps (5)', ['clock', 'Clock (2)', 1, '0%', '0.2%', '0 MB/s', '0.1 Mbps'], ['chrome', 'Google Chrome (35)', 1, '0%', '3.5%', '0.1 MB/s', '0.1 Mbps'], ['ninja', 'NinjaTrader (10)', 1, '2.5%', '2.3%', '0 MB/s', '0.1 Mbps'], ['gear', 'Settings', 1], ['task', 'Task Manager', 1, '0.3%', '0.3%'],
  'Background processes (98)', ['win', 'Acrobat Update Service (32 bit)', 1], ['lic', 'Activation Licensing Service', 1], ['lic', 'Activation Licensing Service (32 bit)', 1], ['svc', 'Antimalware Service Executable', 1, '0%', '0.5%'], ['apex', 'Apex.DesktopAssistant (32 bit)', 0, '0.1%', '0.3%'], ['svc', 'Application Frame Host', 0], ['svc', 'Application Hub Client Service (32 bit)', 1], ['svc', 'Background Task Host (2)', 1], ['svc', 'Bonjour Service', 1], ['svc', 'COM Surrogate', 0], ['svc', 'COM Surrogate', 0], ['svc', 'Core Service', 1], ['svc', 'Corsair Gaming Headset Drivers', 1], ['svc', 'Corsair iCUE Component', 0]
];
document.getElementById('proc').innerHTML = rows.map(r => {
  if (typeof r === 'string') return `<tr class="grp"><td>${r}</td>${'<td></td>'.repeat(6)}</tr>`;
  const [ic, name, kids, cpu = '0%', mem = '0.1%', disk = '0 MB/s', net = '0 Mbps'] = r;
  const status = ic === 'chrome' ? '<svg viewBox="0 0 8 8"><path d="M1 1h4v3q-1 2-2 2-2-1-2-5M5 2h2v3q-1 2-3 2" fill="none" stroke="#3fae4a"/></svg>' : name[0] === 'B' && name[1] === 'a' ? '<svg viewBox="0 0 8 8"><circle cx="4" cy="4" r="3.300" fill="none" stroke="#c8a415"/><path d="M3 2.500v3M5 2.500v3" stroke="#c8a415"/></svg>' : '';
  const hot = s => parseFloat(s) > 2 ? 'm h' : 'm';
  return `<tr><td><i>${kids ? '›' : ''}</i><svg viewBox="0 0 8 8">${icons[ic]}</svg>${name}</td><td>${status}</td><td class="${hot(cpu)}">${cpu}</td><td class="${hot(mem)}">${mem}</td><td class="m">${disk}</td><td class="m">${net}</td><td></td></tr>`;
}).join('');
```
